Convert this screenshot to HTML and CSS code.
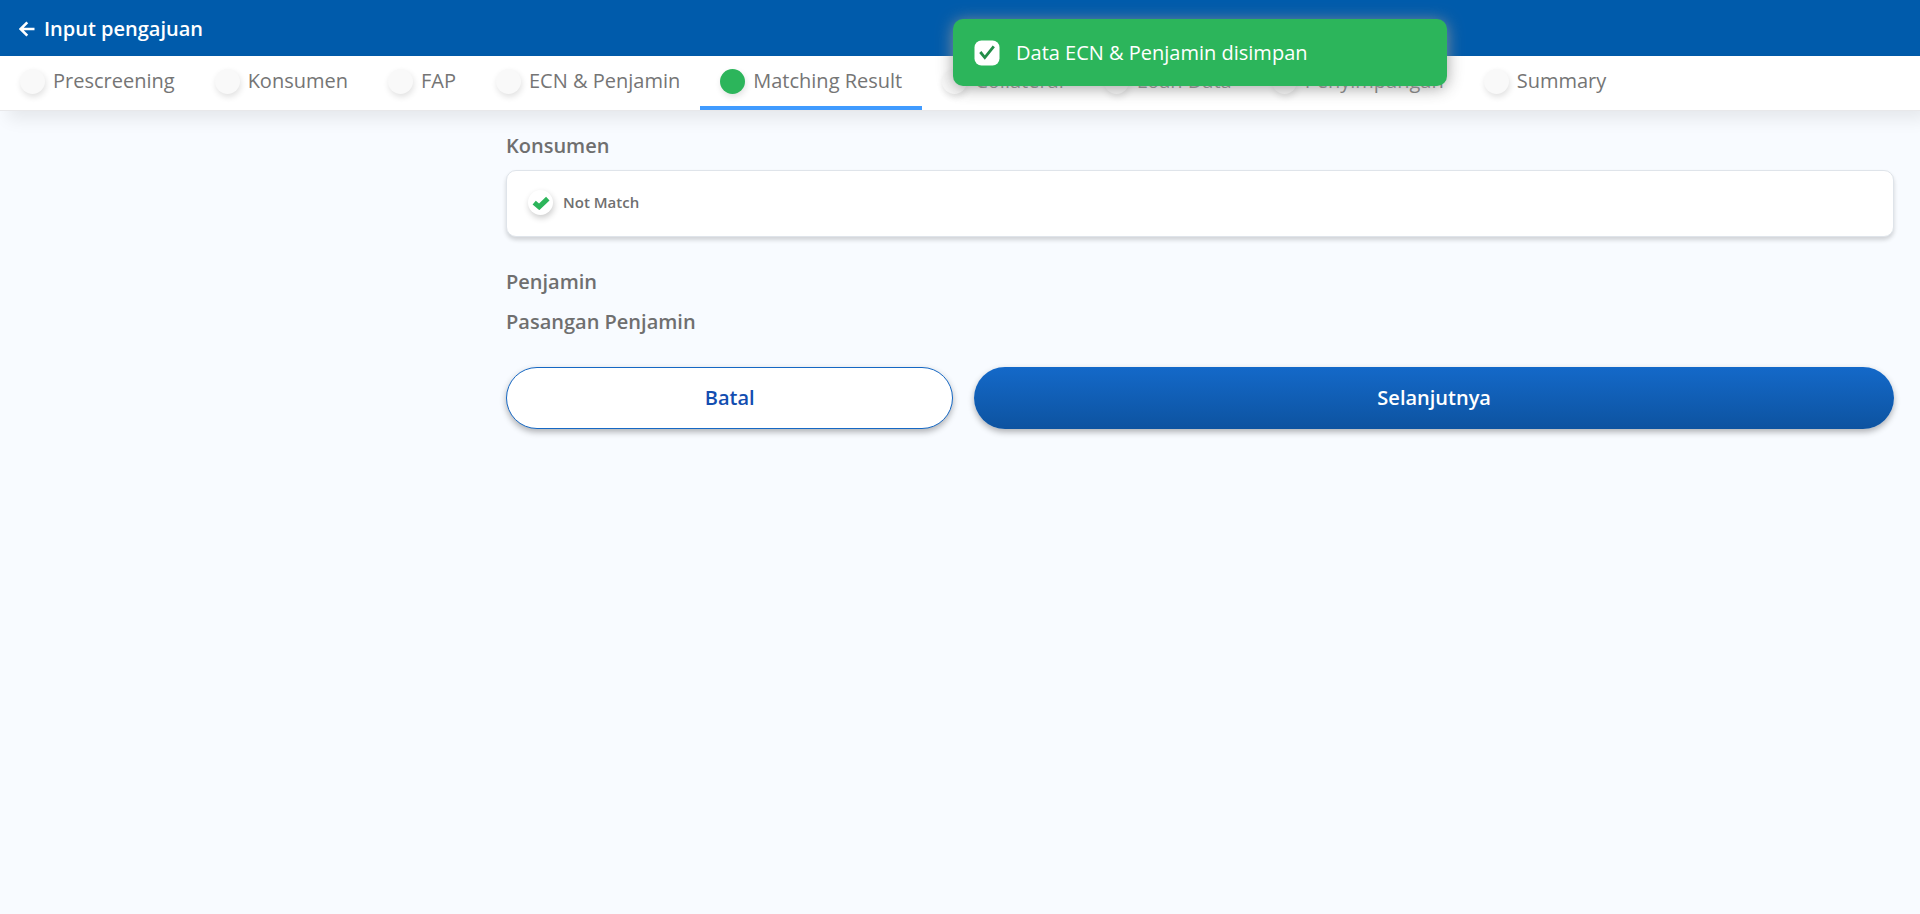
FILE: index.html
```html
<!DOCTYPE html>
<html lang="id">
<head>
<meta charset="utf-8">
<meta name="viewport" content="width=device-width, initial-scale=1">
<title>Input pengajuan</title>
<link rel="stylesheet" href="styles.css">
</head>
<body>
<header class="topbar">
  <button class="back" type="button" aria-label="Kembali">
    <svg class="back-icon" viewBox="0 0 16 16" aria-hidden="true"><path d="M15.5 8H2M8.3 1.3L1.6 8L8.3 14.7"/></svg>
  </button>
  <h1 class="title">Input pengajuan</h1>
</header>
<nav class="steps">
  <a class="step" href="#"><span class="dot"></span>Prescreening</a>
  <a class="step" href="#"><span class="dot"></span>Konsumen</a>
  <a class="step" href="#"><span class="dot"></span>FAP</a>
  <a class="step" href="#"><span class="dot"></span>ECN &amp; Penjamin</a>
  <a class="step step-active" href="#" aria-current="step"><span class="dot"></span>Matching Result</a>
  <a class="step" href="#"><span class="dot"></span>Collateral</a>
  <a class="step" href="#"><span class="dot"></span>Loan Data</a>
  <a class="step" href="#"><span class="dot"></span>Penyimpangan</a>
  <a class="step" href="#"><span class="dot"></span>Summary</a>
</nav>
<main class="content">
  <section class="group">
    <h2 class="heading">Konsumen</h2>
    <div class="card">
      <span class="badge"><svg class="badge-icon" viewBox="0 0 18 14" aria-hidden="true"><path d="M2.2 6.6L7.2 10.8L15.8 2.6"/></svg></span>
      <span class="status">Not Match</span>
    </div>
  </section>
  <h2 class="heading">Penjamin</h2>
  <h2 class="heading">Pasangan Penjamin</h2>
  <div class="actions">
    <button class="btn btn-cancel" type="button">Batal</button>
    <button class="btn btn-next" type="button">Selanjutnya</button>
  </div>
</main>
<div class="toast" role="status">
  <svg class="toast-icon" viewBox="0 0 26 26" aria-hidden="true"><rect x="0.5" y="0.5" width="25" height="25" rx="7"/><path d="M6.3 12L10.8 17.6L19.8 6.4"/></svg>
  <span>Data ECN &amp; Penjamin disimpan</span>
</div>
</body>
</html>
```
FILE: styles.css
```css
* {
  box-sizing: border-box;
}

body {
  margin: 0;
  min-height: 100vh;
  background: #f8fbff;
  color: #6f6f6f;
  font-family: "Open Sans", sans-serif;
  font-size: 20px;
  line-height: 28px;
}

.topbar {
  display: flex;
  align-items: center;
  gap: 9px;
  height: 56px;
  padding: 2px 19px 0;
  background: #005bab;
  color: #fff;
}

.back {
  display: flex;
  padding: 0;
  border: 0;
  background: none;
  color: inherit;
  cursor: pointer;
}

.back-icon {
  width: 16px;
  height: 16px;
  fill: none;
  stroke: currentColor;
  stroke-width: 2.6;
}

.title {
  margin: 0;
  font-size: 20px;
  font-weight: 600;
}

.steps {
  display: flex;
  height: 55px;
  border-bottom: 1px solid #e8e8ea;
  background: #fff;
  box-shadow: 8px 8px 16px rgba(0, 0, 0, 0.08);
}

.step {
  display: flex;
  align-items: center;
  gap: 8px;
  padding: 0 20px 4px;
  color: #757575;
  text-decoration: none;
  white-space: nowrap;
}

.step-active {
  padding-bottom: 0;
  border-bottom: 4px solid #409bff;
}

.dot {
  width: 25px;
  height: 25px;
  border-radius: 50%;
  background: #f9f9f9;
  box-shadow: 1px 3px 6px rgba(0, 0, 0, 0.12);
}

.step-active .dot {
  background: #2cb55b;
}

.content {
  display: flex;
  flex-direction: column;
  gap: 12px;
  margin-left: 25%;
  padding: 21px 26px;
}

.group {
  margin-bottom: 19px;
}

.heading {
  margin: 0;
  font-size: 20px;
  font-weight: 600;
}

.card {
  display: flex;
  align-items: center;
  gap: 10px;
  height: 67px;
  margin-top: 10px;
  padding: 0 21px 2px;
  border: 1px solid #dfe4ea;
  border-radius: 10px;
  background: #fff;
  box-shadow: 0 3px 4px rgba(0, 0, 0, 0.16);
}

.badge {
  display: grid;
  place-items: center;
  width: 25px;
  height: 25px;
  border-radius: 50%;
  background: #fff;
  box-shadow: 1px 3px 6px rgba(0, 0, 0, 0.2);
}

.badge-icon {
  width: 18px;
  height: 14px;
  fill: none;
  stroke: #2cb55b;
  stroke-width: 5;
}

.status {
  padding-bottom: 2px;
  font-size: 15px;
  font-weight: 600;
}

.actions {
  display: flex;
  gap: 21px;
  margin-top: 19px;
}

.btn {
  height: 62px;
  padding: 0;
  border: 0;
  border-radius: 31px;
  box-shadow: 0 3px 6px rgba(0, 0, 0, 0.3);
  font: inherit;
  font-weight: 600;
  cursor: pointer;
}

.btn-cancel {
  flex: 446 1 0;
  border: 1px solid #1668c4;
  background: #fff;
  color: #124db0;
}

.btn-next {
  flex: 921 1 0;
  background: linear-gradient(#1469c9, #0d53a0);
  color: #fff;
}

.toast {
  position: absolute;
  top: 19px;
  left: calc(62.5% - 247px);
  display: flex;
  align-items: center;
  gap: 16px;
  width: 494px;
  height: 67px;
  padding: 0 21px;
  border-radius: 10px;
  background: #2cb55b;
  box-shadow: 0 2px 16px rgba(150, 150, 150, 0.9);
  color: #fff;
}

.toast-icon {
  width: 26px;
  height: 26px;
  fill: #fff;
}

.toast-icon path {
  fill: none;
  stroke: #238d49;
  stroke-width: 2.8;
}
```
